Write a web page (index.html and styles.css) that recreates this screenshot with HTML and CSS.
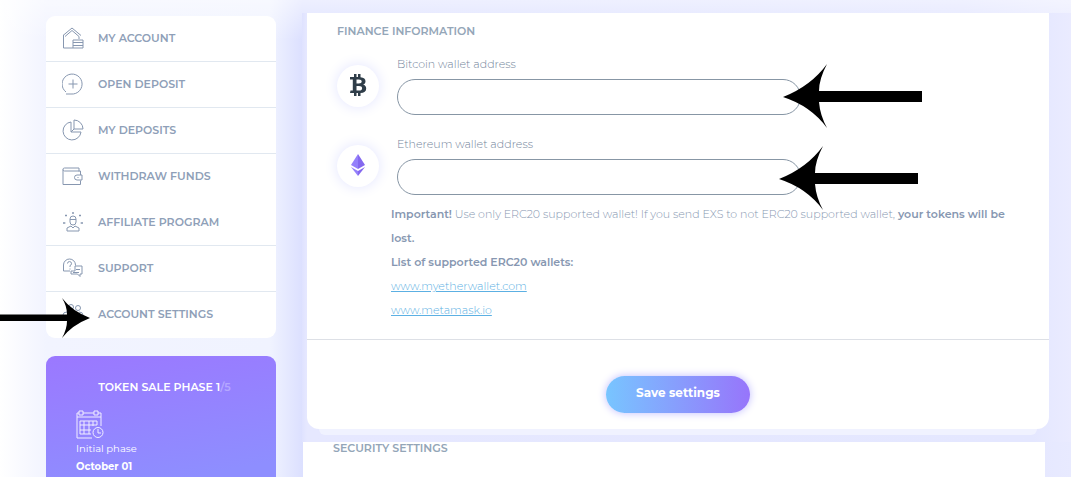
FILE: index.html
```html
<!DOCTYPE html>
<html lang="en">
<head>
    <meta charset="UTF-8">
    <meta name="viewport" content="width=device-width, initial-scale=1.0">
    <title>Account Settings</title>
    <link rel="stylesheet" href="styles.css">
</head>
<body>
    <div class="page">
        <aside class="sidebar">
            <nav class="menu">
                <a href="#account">
                    <svg class="icon" viewBox="0 0 22 22"><path d="M1 8.500 10 1l9 7.500M3 9.500l7-6 7 6V12M1.500 8v13H11M11 13h10v8H11zM11 15.500h10M11 18.500h10"/></svg>
                    MY ACCOUNT
                </a>
                <a href="#open">
                    <svg class="icon" viewBox="0 0 22 22"><path d="M4 19a10 10 0 1 1 5 2H4M11 6.500v9M6.500 11h9"/></svg>
                    OPEN DEPOSIT
                </a>
                <a href="#deposits">
                    <svg class="icon" viewBox="0 0 22 22"><path d="M9 3a9 9 0 1 0 10 10H9zM12 1v9h9a9 9 0 0 0-9-9zM12 10l-3 3"/></svg>
                    MY DEPOSITS
                </a>
                <a href="#withdraw" class="no-line">
                    <svg class="icon" viewBox="0 0 22 22"><path d="M17 6.500V3H2.500a1.500 1.500 0 0 0 0 3H18.500v4M1 4.500V19.500h17.500v-4M20 10h-5a2.500 2.500 0 0 0 0 5h5zM15.500 12.500h1"/></svg>
                    WITHDRAW FUNDS
                </a>
                <a href="#affiliate">
                    <svg class="icon" viewBox="0 0 22 22"><path d="M8 8a3 3 0 0 1 6 0v3a3 3 0 0 1-6 0zM8 8.500h6M5 20v-3l4-2 2 2 2-2 4 2v3zM11 1v2M10 2h2M3 4.500h2M4 3.500v2M17 4.500h2M18 3.500v2M1 12h2.500M2 11v2M18.500 12H21M20 11v2"/></svg>
                    AFFILIATE PROGRAM
                </a>
                <a href="#support">
                    <svg class="icon" viewBox="0 0 22 22"><path d="M8 14H1.500V8a6 6 0 1 1 12 0v.500M5.500 6.500a2 2 0 1 1 2.500 2v1.500M8 11.500v1M13 9h7v8h-2v2.500L15.500 17H9v-3h4zM11 15.500h6M14 12.500h4"/></svg>
                    SUPPORT
                </a>
                <a href="#settings" class="current">
                    <svg class="icon" viewBox="0 0 22 22"><circle cx="9" cy="4" r="2.500"/><circle cx="16" cy="5" r="2.500"/><path d="M1 14v-2q0-3 4-3M21 14v-2q0-3-4-3M6 19v-3q0-4 5-4t5 4v3z"/></svg>
                    ACCOUNT SETTINGS
                    <svg class="arrow arrow-menu" viewBox="0 0 90 40"><path d="M0 16.500h67Q67 8 62 0 72 13 90 20 72 27 62 40 67 31 67 23H0z"/></svg>
                </a>
            </nav>

            <section class="token">
                <h2>TOKEN SALE PHASE 1<span>/5</span></h2>
                <svg class="calendar" viewBox="0 0 28 30"><path d="M3 4H1v25h15M7 4h11M22 4h3v13M3 2h4v4H3zM18 2h4v4h-4zM1 8h24M4 12h17v4M4 12v13h11M8 12v13M13 12v13M17 12v5M4 16h17M4 21h11"/><circle cx="22" cy="23.500" r="5"/><path d="M22 20v4h3"/></svg>
                <p>Initial phase</p>
                <strong>October 01</strong>
            </section>
        </aside>

        <main class="content">
            <div class="finance-wrap">
                <form class="finance">
                    <div class="finance-body">
                        <h2>FINANCE INFORMATION</h2>
                        <div class="wallet">
                            <span class="coin">
                                <svg width="18" height="22" viewBox="0 0 18 22"><path fill="#2f3d49" fill-rule="evenodd" d="M5 0h2.500v3H9V0h2.500v3.200C15 3.600 16.500 5 16.500 7.200c0 1.700-1 2.900-2.500 3.400 2 .5 3.200 1.900 3.200 3.900 0 2.900-2 4.400-5.700 4.500v3H9v-3H7.500v3H5v-3H1l.5-2.500h2.300v-11H1V3h4zM7.500 5.500v4h2.200c2 0 3-.7 3-2s-1-2-3-2zM7.500 12v4.500h2.600c2 0 3-.8 3-2.300S12 12 10 12z"/></svg>
                            </span>
                            <div class="field">
                                <label for="btc">Bitcoin wallet address</label>
                                <input type="text" id="btc">
                                <svg class="arrow arrow-btc" viewBox="0 0 140 64"><path d="M139 27H36Q36 15 44 0 28 22 0 33 28 42 44 64 37 51 36 38H139z"/></svg>
                            </div>
                        </div>
                        <div class="wallet">
                            <span class="coin">
                                <svg width="14" height="22" viewBox="0 0 14 22"><path fill="#9480fb" d="M7 0 0 11l7 4z"/><path fill="#8468ef" d="m7 0 7 11-7 4z"/><path fill="#9480fb" d="m0 13 7 9v-5z"/><path fill="#8468ef" d="m14 13-7 9v-5z"/></svg>
                            </span>
                            <div class="field">
                                <label for="eth">Ethereum wallet address</label>
                                <input type="text" id="eth">
                                <svg class="arrow arrow-eth" viewBox="0 0 140 64"><path d="M139 27H36Q36 15 44 0 28 22 0 33 28 42 44 64 37 51 36 38H139z"/></svg>
                            </div>
                        </div>
                        <div class="note">
                            <p><strong>Important!</strong> Use only ERC20 supported wallet! If you send EXS to not ERC20 supported wallet, <strong>your tokens will be lost.</strong></p>
                            <p><strong>List of supported ERC20 wallets:</strong></p>
                            <p><a href="https://www.myetherwallet.com">www.myetherwallet.com</a></p>
                            <p><a href="https://www.metamask.io">www.metamask.io</a></p>
                        </div>
                    </div>
                    <div class="finance-footer">
                        <button type="submit">Save settings</button>
                    </div>
                </form>
                <div class="card-edge"></div>
            </div>
            <section class="security">
                <h2>SECURITY SETTINGS</h2>
            </section>
        </main>
    </div>
</body>
</html>
```

FILE: styles.css
```css
* {
    box-sizing: border-box;
}
body {
    margin: 0;
    font-family: Montserrat, Inter, sans-serif;
    font-size: 11px;
    color: #8797b1;
    background: #fff;
}
h2, p {
    margin: 0;
}
h2 {
    font-size: 11px;
    line-height: 14px;
    font-weight: 600;
}
.page {
    display: grid;
    grid-template-columns: 230px 1fr;
    gap: 26px;
    min-height: 100vh;
    padding-left: 46px;
    background:
        linear-gradient(rgba(255,255,255,0.5), rgba(255,255,255,0) 40px),
        linear-gradient(to right, #fff, #f2f4ff 46px, #f0f3ff 270px, #dce0ff 302px, #e0e3ff 90%, #e8eaff);
}

/* left column */
.sidebar {
    display: flex;
    flex-direction: column;
    gap: 18px;
    padding-top: 16px;
}
.menu {
    background: #fff;
    border-radius: 9px;
}
.menu a {
    display: flex;
    align-items: center;
    gap: 14px;
    height: 46px;
    padding: 0 16px 2px;
    border-bottom: 1px solid #e1e8f0;
    color: #8f9fb8;
    font-weight: 600;
    text-decoration: none;
}
.menu a.no-line {
    border-color: transparent;
}
.menu a.current {
    position: relative;
    border-bottom: none;
}
.icon {
    width: 22px;
    height: 22px;
    fill: none;
    stroke: #8797b0;
    stroke-width: 1;
}
.token {
    flex: 1;
    padding: 24px 30px 2px;
    border-radius: 9px 9px 0 0;
    color: #fff;
    background: linear-gradient(170deg, #9b78ff, #8e8eff 90%);
}
.token h2 {
    margin-bottom: 15px;
    padding-left: 7px;
    text-align: center;
}
.token h2 span {
    opacity: 0.3;
}
.calendar {
    display: block;
    width: 28px;
    height: 30px;
    margin-bottom: 1px;
    fill: none;
    stroke: #f1eeff;
    stroke-width: 1;
}
.token p, .token strong {
    display: block;
    font-size: 10px;
    line-height: 18px;
}

/* right column */
.content {
    display: flex;
    flex-direction: column;
    padding-top: 13px;
}
.finance-wrap {
    padding: 0 22px 7px 5px;
    background: linear-gradient(to right, #dfe2ff, #e6e8ff 5px, #e4e7ff 95%, #eaebff);
}
.finance {
    background: #fff;
    border-radius: 0 0 12px 12px;
}
.finance-body {
    padding: 11px 30px 17px;
    border-bottom: 1px solid #dde0e6;
}
.finance h2, .security h2 {
    color: #94a6b8;
}
.finance h2 {
    margin-bottom: 18px;
}
.wallet {
    display: flex;
    gap: 18px;
    height: 80px;
}
.coin {
    display: flex;
    align-items: center;
    justify-content: center;
    width: 42px;
    height: 42px;
    margin-top: 9px;
    padding-bottom: 2px;
    border-radius: 50%;
    background: #fff;
    box-shadow: 0 0 14px #e2e4ff;
}
.field {
    position: relative;
    flex: 1;
    max-width: 404px;
}
.field label {
    display: block;
    line-height: 16px;
    margin-bottom: 7px;
    font-weight: 300;
    color: #74859b;
}
.field input {
    display: block;
    width: 100%;
    height: 36px;
    padding: 0 18px;
    border: 1px solid #8796a5;
    border-radius: 18px;
    background: #fff;
    font: inherit;
}
.note {
    margin-top: -14px;
    padding: 0 10px 0 54px;
    font-weight: 300;
    line-height: 24px;
}
.note strong {
    font-weight: 600;
}
.note a {
    color: #5cb0e3;
}
.finance-footer {
    display: flex;
    justify-content: center;
    padding: 36px 0 16px;
}
button {
    height: 37px;
    padding: 0 30px 4px;
    border: none;
    border-radius: 19px;
    color: #fff;
    background: linear-gradient(to right, #78c5ff, #9775fb);
    box-shadow: 0 0 8px #c0bcff;
    font: 700 12px Montserrat, Inter, sans-serif;
    cursor: pointer;
}
.card-edge {
    height: 6px;
    margin: 0 12px;
    border-radius: 0 0 8px 8px;
    background: #f0f2ff;
}
.security {
    flex: 1;
    margin: 0 26px 0 1px;
    padding: 0 30px;
    background: #fff;
}
.security h2 {
    line-height: 12px;
}

/* pointers lying over the page */
.arrow {
    position: absolute;
    fill: #000;
    pointer-events: none;
}
.arrow-menu {
    left: -46px;
    top: 6px;
    width: 90px;
    height: 40px;
}
.arrow-btc, .arrow-eth {
    width: 140px;
    height: 64px;
    right: -122px;
    top: 8px;
}
.arrow-eth {
    right: -118px;
    top: 10px;
}
```
